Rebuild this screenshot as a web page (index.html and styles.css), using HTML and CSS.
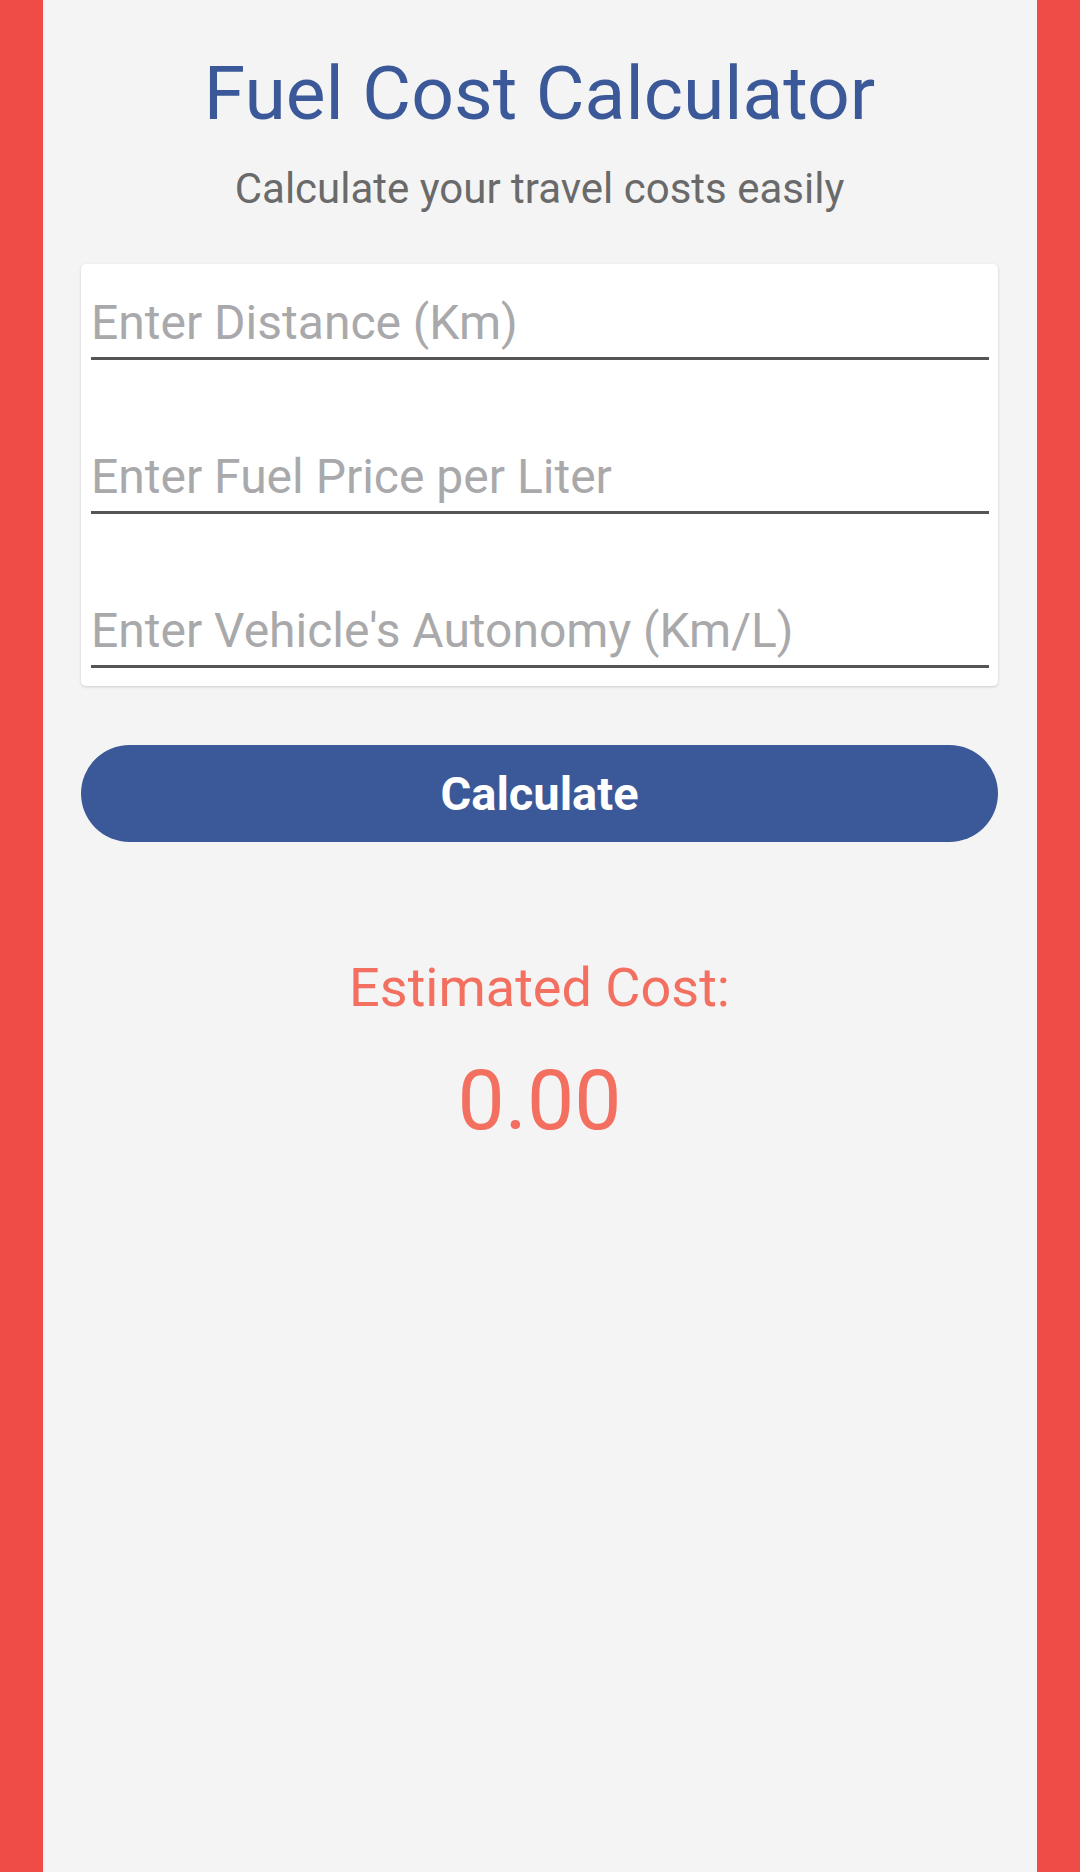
FILE: index.html
```html
<!DOCTYPE html>
<html lang="en">
<head>
<meta charset="utf-8">
<title>Fuel Cost Calculator</title>
<link rel="stylesheet" href="styles.css">
</head>
<body>
<main class="screen">
  <h1 class="title">Fuel Cost Calculator</h1>
  <p class="subtitle">Calculate your travel costs easily</p>
  <section class="card">
    <input class="field" type="text" placeholder="Enter Distance (Km)">
    <input class="field" type="text" placeholder="Enter Fuel Price per Liter">
    <input class="field" type="text" placeholder="Enter Vehicle's Autonomy (Km/L)">
  </section>
  <button class="calc" type="button">Calculate</button>
  <p class="result-label">Estimated Cost:</p>
  <p class="result-value">0.00</p>
</main>
</body>
</html>
```
FILE: styles.css
```css
html, body {
  margin: 0;
  padding: 0;
}
body {
  background: #ef4b47;
  font-family: Roboto, "Noto Sans", sans-serif;
}
.screen {
  margin: 0 43px 0 43px;
  min-height: 1872px;
  background: #f4f4f5;
  padding: 50px 39px 0 38px;
  box-sizing: border-box;
  display: flex;
  flex-direction: column;
}
.title {
  margin: 0;
  font-weight: 400;
  font-size: 75px;
  line-height: 86px;
  color: #3b5998;
  text-align: center;
}
.subtitle {
  margin: 29px 0 0 0;
  font-size: 42px;
  line-height: 48px;
  color: #6a6a6a;
  text-align: center;
}
.card {
  margin-top: 51px;
  background: #ffffff;
  border-radius: 5px;
  box-shadow: 0 1px 3px rgba(0, 0, 0, 0.16);
  padding: 30px 9px 18px 10px;
  display: flex;
  flex-direction: column;
  gap: 88px;
}
.field {
  display: block;
  width: 100%;
  box-sizing: border-box;
  margin: 0;
  padding: 0 0 7px 0;
  border: none;
  border-bottom: 3px solid #555555;
  background: transparent;
  font-family: Roboto, "Noto Sans", sans-serif;
  font-size: 48px;
  line-height: 56px;
  height: 66px;
  color: #333;
  outline: none;
}
.field::placeholder {
  color: #a9a9ab;
  opacity: 1;
}
.calc {
  margin-top: 59px;
  height: 97px;
  border: none;
  border-radius: 49px;
  background: #3b5998;
  color: #ffffff;
  font-family: Roboto, "Noto Sans", sans-serif;
  font-weight: 700;
  font-size: 47px;
  line-height: 54px;
  padding: 0;
}
.result-label {
  margin: 114px 0 0 0;
  font-size: 54px;
  line-height: 64px;
  color: #f36f60;
  text-align: center;
}
.result-value {
  margin: 32px 0 0 0;
  font-size: 84px;
  line-height: 98px;
  color: #f36f60;
  text-align: center;
}
```
